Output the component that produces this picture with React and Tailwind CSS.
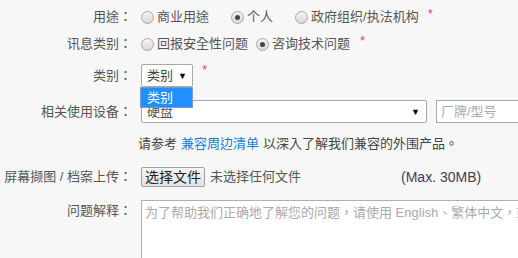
import React from "react";

function Radio({ checked, label }) {
  return (
    <label className="flex items-center mr-[22px]">
      <span className="w-[13px] h-[13px] rounded-full border border-[#a8a8a8] bg-gradient-to-b from-[#f4f4f4] to-[#d8d8d8] flex items-center justify-center">
        {checked && <span className="w-[5px] h-[5px] rounded-full bg-[#444]" />}
      </span>
      <span className="ml-[3px]">{label}</span>
    </label>
  );
}

function Star() {
  return <span className="text-[#f2359b] text-[13px] self-start ml-[9px] -mt-[3px]">*</span>;
}

function Row({ label, children, className = "", top = false }) {
  return (
    <div className={"flex " + (top ? "items-start " : "items-center ") + className}>
      <div className={"w-[132px] text-right shrink-0 " + (top ? "pt-[2px]" : "")}>{label}</div>
      <div className="ml-[9px] flex items-center flex-1 min-w-0">{children}</div>
    </div>
  );
}

export default function App() {
  return (
    <div
      className="w-[518px] h-[258px] overflow-hidden bg-[#f7f7f7] text-[13px] text-[#555] leading-[18px] pt-[6px]"
      style={{ fontFamily: '"Liberation Sans", "Noto Sans CJK TC", sans-serif' }}
    >
      <Row label="用途：" className="h-[22px]">
        <Radio label="商业用途" />
        <Radio checked label="个人" />
        <Radio label="政府组织/执法机构" />
        <span className="text-[#f2359b] text-[13px] self-start -ml-[13px] -mt-[3px]">*</span>
      </Row>

      <Row label="讯息类别：" className="h-[22px] mt-[5px]">
        <label className="flex items-center mr-[8px]">
          <span className="w-[13px] h-[13px] rounded-full border border-[#a8a8a8] bg-gradient-to-b from-[#f4f4f4] to-[#d8d8d8]" />
          <span className="ml-[3px]">回报安全性问题</span>
        </label>
        <Radio checked label="咨询技术问题" />
        <span className="text-[#f2359b] text-[13px] self-start -ml-[12px] -mt-[3px]">*</span>
      </Row>

      <Row label="类别：" className="h-[23px] mt-[9px]">
        <div className="relative">
          <div className="w-[52px] h-[23px] border border-[#a9a9a9] rounded-[2px] bg-white flex items-center justify-between pl-[5px] pr-[5px] text-[#444]">
            <span>类别</span>
            <span className="text-[9px] text-black">▼</span>
          </div>
          <div className="absolute left-[-1px] top-[23px] w-[53px] h-[21px] bg-[#1e90ff] border border-[#7b9cc4] text-white pl-[6px] flex items-center z-10">
            类别
          </div>
        </div>
        <Star />
      </Row>

      <Row label="相关使用设备：" className="h-[23px] mt-[13px]">
        <div className="w-[286px] h-[23px] border border-[#a9a9a9] rounded-[2px] bg-white flex items-center justify-between pl-[5px] pr-[6px] text-[#555] shrink-0">
          <span>硬盘</span>
          <span className="text-[9px] text-black">▼</span>
        </div>
        <div className="ml-[9px] h-[23px] flex-1 border border-[#a9a9a9] border-r-0 bg-white pl-[4px] flex items-center text-[#aaa]">
          厂牌/型号
        </div>
      </Row>

      <div className="h-[22px] mt-[10px] flex items-center pl-[138px] text-[#444] whitespace-nowrap">
        请参考 <span className="text-[#1a7fd4] mx-[4px]">兼容周边清单</span> 以深入了解我们兼容的外围产品。
      </div>

      <Row label="屏幕撷图 / 档案上传：" className="h-[19px] mt-[12px]">
        <div className="w-[64px] h-[20px] border border-[#a0a0a0] rounded-[2px] bg-gradient-to-b from-[#f6f6f6] to-[#e2e2e2] flex items-center justify-center text-[14px] text-[#222] shrink-0">
          选择文件
        </div>
        <span className="ml-[5px] text-[#555]">未选择任何文件</span>
        <span className="ml-[100px] text-[14px] text-[#3d3d5c]">(Max. 30MB)</span>
      </Row>

      <Row label="问题解释：" className="mt-[14px]" top>
        <div className="flex-1 h-[70px] border border-[#b0b0b0] border-r-0 bg-white pl-[3px] pt-[3px] text-[#aaa] whitespace-nowrap overflow-hidden">
          为了帮助我们正确地了解您的问题，请使用 English、繁体中文，或简体中文
        </div>
      </Row>
    </div>
  );
}
